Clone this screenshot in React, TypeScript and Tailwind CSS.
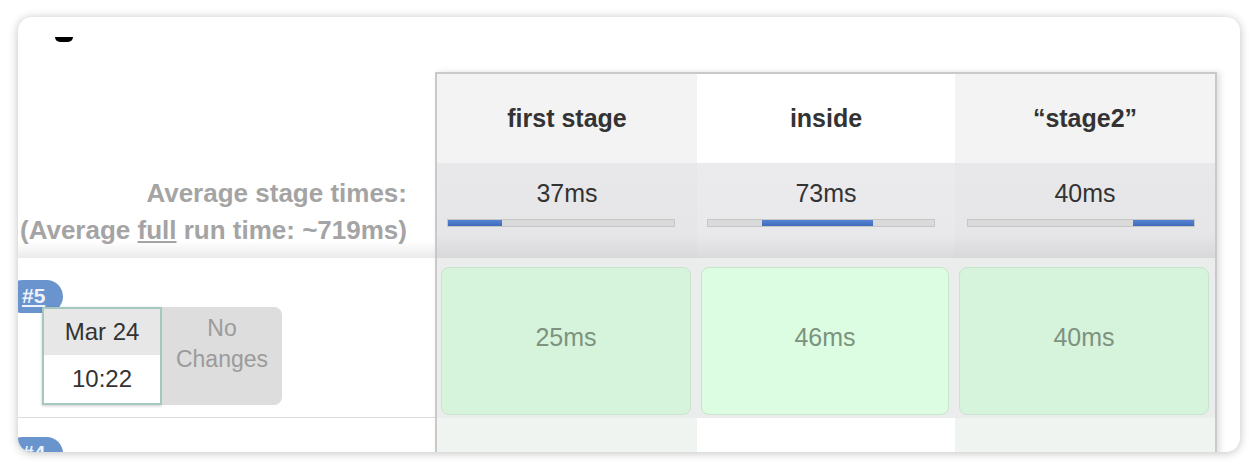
import React from "react";

type Stage = {
  name: string;
  avg: string;
  from: number;
  to: number;
  time: string;
  width: string;
  barMl: string;
  headBg: string;
  avgBg: string;
  cellBg: string;
  nextBg: string;
};

const stages: Stage[] = [
  {
    name: "first stage",
    avg: "37ms",
    from: 0,
    to: 24,
    time: "25ms",
    width: "w-[260px]",
    barMl: "ml-[10px]",
    headBg: "bg-[#f3f3f4]",
    avgBg: "bg-[linear-gradient(to_bottom,#e8e8ea_0%,#e6e6e8_75%,#d8d8da_100%)]",
    cellBg: "bg-[#d5f4db]",
    nextBg: "bg-[#eff4f1]",
  },
  {
    name: "inside",
    avg: "73ms",
    from: 24,
    to: 73,
    time: "46ms",
    width: "w-[258px]",
    barMl: "ml-[10px]",
    headBg: "bg-white",
    avgBg: "bg-[linear-gradient(to_bottom,#ebebed_0%,#e9e9eb_75%,#dadadc_100%)]",
    cellBg: "bg-[#dcfde2]",
    nextBg: "bg-white",
  },
  {
    name: "\u201cstage2\u201d",
    avg: "40ms",
    from: 73,
    to: 100,
    time: "40ms",
    width: "w-[260px]",
    barMl: "ml-[12px]",
    headBg: "bg-[#f3f3f4]",
    avgBg: "bg-[linear-gradient(to_bottom,#e8e8ea_0%,#e6e6e8_75%,#d8d8da_100%)]",
    cellBg: "bg-[#d6f3dc]",
    nextBg: "bg-[#eff4f1]",
  },
];

function Bar({ from, to, ml }: { from: number; to: number; ml: string }) {
  return (
    <div className={`mt-[11px] flex h-[8px] w-[228px] overflow-hidden border border-[#c6c6c6] bg-[#dadada] ${ml}`}>
      <div style={{ width: `${from}%` }} />
      <div
        className="h-full bg-[linear-gradient(to_bottom,#5583d3,#3f6bbd)]"
        style={{ width: `${to - from}%` }}
      />
    </div>
  );
}

export default function App() {
  return (
    <div
      className="h-[470px] w-[1258px] bg-white pl-[18px] pt-[17px]"
      style={{ fontFamily: '"Liberation Sans", Arial, Helvetica, sans-serif' }}
    >
      <div className="h-[435px] w-[1222px] overflow-hidden rounded-[14px] bg-white shadow-[0_1px_10px_rgba(0,0,0,0.25)]">
        <div className="h-[55px] pl-[37px] pt-[20px]">
          <div className="h-[5px] w-[18px] rounded-b-full rounded-t-[40%] bg-black" />
        </div>
        <div className="flex">
          {/* left column */}
          <div className="flex w-[417px] flex-col">
            <div className="h-[91px]" />
            <div className="flex h-[95px] flex-col items-end bg-[linear-gradient(to_bottom,#ffffff_82%,#ebebeb_100%)] pr-[28px] pt-[12px] text-[26px] font-bold leading-[37px] text-[#a4a4a4]">
              <div>Average stage times:</div>
              <div>
                (Average <span className="underline">full</span> run time: ~719ms)
              </div>
            </div>
            <div className="h-[160px] border-b border-[#dcdcdc] pt-[22px]">
              <div className="-ml-[12px] flex h-[33px] w-[57px] items-center rounded-full bg-[#6a94cd] pb-[2px] pl-[16px] text-[21px] font-bold text-[#eef2fb] underline">
                #5
              </div>
              <div className="relative z-10 -mt-[6px] ml-[24px] flex">
                <div className="flex h-[98px] w-[120px] flex-col border-2 border-[#a4c8bf] bg-white text-[24px] text-[#333] shadow-[0_1px_3px_rgba(0,0,0,0.2)]">
                  <div className="flex h-[46px] items-center justify-center bg-[#e7e7e7]">Mar 24</div>
                  <div className="flex flex-1 items-center justify-center">10:22</div>
                </div>
                <div className="h-[98px] w-[120px] rounded-r-[8px] bg-[#dddddd] pt-[6px] text-center text-[23px] leading-[31px] text-[#9b9b9b]">
                  <div>No</div>
                  <div>Changes</div>
                </div>
              </div>
            </div>
            <div className="pt-[19px]">
              <div className="-ml-[12px] flex h-[33px] w-[57px] items-center rounded-full bg-[#6a94cd] pb-[2px] pl-[16px] text-[21px] font-bold text-[#eef2fb] underline">
                #4
              </div>
            </div>
          </div>
          {/* stage table */}
          <div className="flex h-[400px] border-l-2 border-r-2 border-t-2 border-[#c9c9c9] shadow-[3px_0_6px_rgba(0,0,0,0.12)]">
            {stages.map((s) => (
              <div key={s.name} className={`flex flex-col ${s.width}`}>
                <div
                  className={`flex h-[89px] items-center justify-center text-[25px] font-bold text-[#333] ${s.headBg}`}
                >
                  {s.name}
                </div>
                <div className={`h-[95px] pt-[15px] ${s.avgBg}`}>
                  <div className="text-center text-[25px] leading-[30px] text-[#333]">{s.avg}</div>
                  <Bar from={s.from} to={s.to} ml={s.barMl} />
                </div>
                <div className="h-[160px] bg-[#ebedec] pb-[3px] pl-[4px] pr-[6px] pt-[9px]">
                  <div
                    className={`flex h-[148px] items-center justify-center rounded-[8px] border border-[#c7e4cd] pb-[7px] text-[25px] text-[#7d927f] ${s.cellBg}`}
                  >
                    {s.time}
                  </div>
                </div>
                <div className={`flex-1 ${s.nextBg}`} />
              </div>
            ))}
          </div>
        </div>
      </div>
    </div>
  );
}
